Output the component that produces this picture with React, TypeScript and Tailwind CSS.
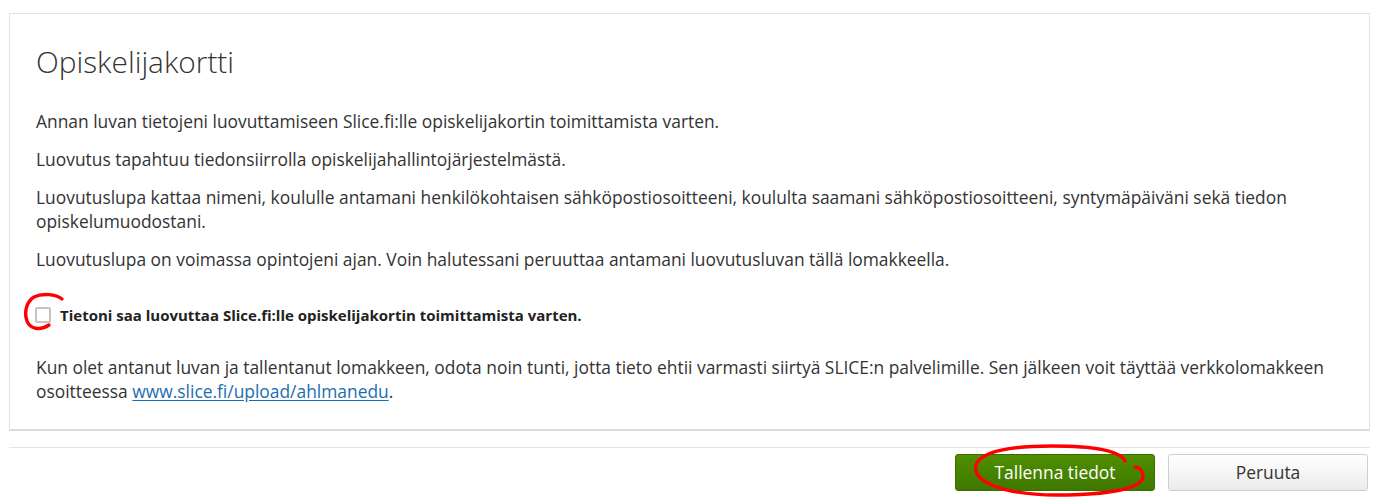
import React from "react";

const FONT = { fontFamily: '"Open Sans", "Liberation Sans", sans-serif' };

export default function App() {
  return (
    <div className="w-[1384px] h-[500px] bg-white text-[#333] overflow-hidden" style={FONT}>
      <div className="pl-[9px] pr-[14px] pt-[13px]">
        {/* ── Consent panel ── */}
        <div className="border border-[#e3e3e3] border-b-2 border-b-[#dcdcdc] bg-white pl-[26px] pr-6 pt-[30px] pb-[26px]">
          <h1 className="text-[29.8px] font-light leading-[36px] text-[#333] mb-[29px]">Opiskelijakortti</h1>

          <div className="text-[17.4px] leading-[24px] flex flex-col gap-[14px]">
            <p>Annan luvan tietojeni luovuttamiseen Slice.fi:lle opiskelijakortin toimittamista varten.</p>
            <p>Luovutus tapahtuu tiedonsiirrolla opiskelijahallintojärjestelmästä.</p>
            <p>
              Luovutuslupa kattaa nimeni, koululle antamani henkilökohtaisen sähköpostiosoitteeni, koululta saamani
              sähköpostiosoitteeni, syntymäpäiväni sekä tiedon opiskelumuodostani.
            </p>
            <p>Luovutuslupa on voimassa opintojeni ajan. Voin halutessani peruuttaa antamani luovutusluvan tällä lomakkeella.</p>
          </div>

          {/* checkbox row */}
          <label className="relative flex items-center gap-[9px] mt-[32px] h-[24px]">
            <span className="w-4 h-4 ml-[-1px] rounded-[2px] border-2 border-[#c4c4c4] bg-white" />
            <span className="text-[15px] font-bold text-[#222]">
              Tietoni saa luovuttaa Slice.fi:lle opiskelijakortin toimittamista varten.
            </span>
            <svg
              className="absolute left-[-14px] top-[-11px] pointer-events-none"
              width="48"
              height="46"
              viewBox="0 0 48 46"
              fill="none"
            >
              <path
                d="M40 7 C34 2 20 1 12 5 C4 10 2 21 5 29 C8 37 18 39 27 33"
                stroke="#ff0000"
                strokeWidth="3.4"
                strokeLinecap="round"
              />
            </svg>
          </label>

          <p className="text-[17.4px] leading-[24px] mt-[28px]">
            Kun olet antanut luvan ja tallentanut lomakkeen, odota noin tunti, jotta tieto ehtii varmasti siirtyä SLICE:n
            palvelimille. Sen jälkeen voit täyttää verkkolomakkeen osoitteessa{" "}
            <a href="#" className="text-[#1a6eb0] underline underline-offset-2">
              www.slice.fi/upload/ahlmanedu
            </a>
            .
          </p>
        </div>

        {/* ── Footer ── */}
        <div className="mt-[16px] border-t border-[#e5e5e5]" />
        <div className="mt-[6px] flex justify-end gap-[13px] pr-[2px]">
          <div className="relative">
            <button className="w-[200px] h-[37px] rounded-[3px] bg-gradient-to-b from-[#4f8f00] to-[#3f7800] border border-[#3a6f00] text-white text-[17.4px]">
              Tallenna tiedot
            </button>
            <svg
              className="absolute left-[12px] top-[-11px] pointer-events-none"
              width="182"
              height="56"
              viewBox="0 0 182 56"
              fill="none"
            >
              <path
                d="M158 18 C152 6 120 3 85 3 C45 3 14 8 9 22 C5 38 35 52 90 52 C140 52 178 46 176 32 C175 26 171 24 168 24"
                stroke="#ff0000"
                strokeWidth="3.4"
                strokeLinecap="round"
              />
            </svg>
          </div>
          <button className="w-[200px] h-[37px] rounded-[3px] bg-gradient-to-b from-white to-[#ebebeb] border border-[#cfcfcf] text-[#333] text-[17.4px]">
            Peruuta
          </button>
        </div>
      </div>
    </div>
  );
}
